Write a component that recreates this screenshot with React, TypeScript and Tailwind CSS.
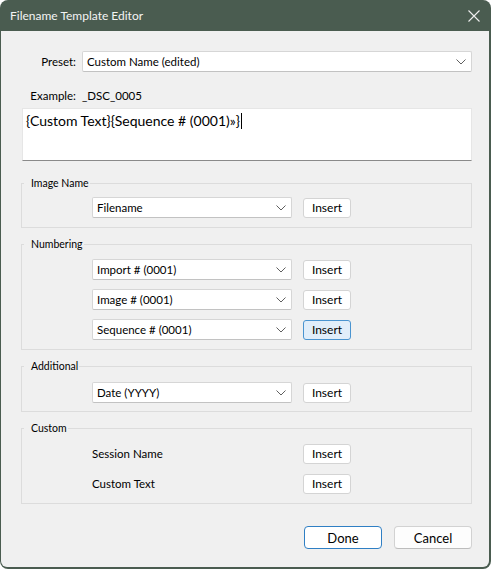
import React from "react";

const font = { fontFamily: 'Lato, "Noto Sans", sans-serif' };

function Chevron() {
  return (
    <svg width="10" height="6" viewBox="0 0 10 6" className="shrink-0">
      <path d="M0.5 0.5 L5 5 L9.5 0.5" fill="none" stroke="#5f5f5f" strokeWidth="1" />
    </svg>
  );
}

function Combo({ value, className = "" }: { value: string; className?: string }) {
  return (
    <div
      className={`flex h-[21px] items-center justify-between rounded-[2px] border border-[#d6d6d6] border-b-[#c2c2c2] bg-white pl-[4px] pr-[5px] text-[11.5px] leading-[16px] text-black ${className}`}
    >
      <span>{value}</span>
      <Chevron />
    </div>
  );
}

function Insert({ active = false }: { active?: boolean }) {
  return (
    <div
      className={`flex h-[20px] w-[48px] items-center justify-center rounded-[3px] border text-[12px] leading-[16px] text-black ${
        active ? "border-[#4a94d0] bg-[#e1eefa]" : "border-[#d4d4d4] bg-white"
      }`}
    >
      Insert
    </div>
  );
}

function Group({ title, children, className = "" }: { title: string; children: React.ReactNode; className?: string }) {
  return (
    <fieldset className={`border border-[#dcdcdc] ${className}`}>
      <legend className="ml-[2px] pl-[7px] pr-[1px] text-[10.5px] leading-[14px] text-black">{title}</legend>
      {children}
    </fieldset>
  );
}

function ComboRow({ value, active = false }: { value: string; active?: boolean }) {
  return (
    <div className="flex items-center">
      <Combo value={value} className="w-[200px]" />
      <div className="ml-[11px]">
        <Insert active={active} />
      </div>
    </div>
  );
}

export default function App() {
  return (
    <div className="h-[569px] w-[491px] bg-white" style={font}>
      <div className="flex h-[569px] w-[491px] flex-col overflow-hidden rounded-[8px] bg-[#4a5c50]">
        <div className="flex h-[31px] shrink-0 items-center justify-between pl-[10px] pr-[10px]">
          <span className="text-[12px] leading-[16px] text-[#f4f4f4]">Filename Template Editor</span>
          <svg width="12" height="12" viewBox="0 0 12 12" className="mr-[1px]">
            <path d="M0.5 0.5 L11.5 11.5 M11.5 0.5 L0.5 11.5" stroke="#eeeeee" strokeWidth="1.1" />
          </svg>
        </div>
        <div className="ml-[1px] mr-[2px] flex h-[536px] flex-col rounded-b-[6px] bg-[#f0f0f0] pl-[20px] pr-[17px] pt-[20px] text-black">
          <div className="flex h-[21px] items-center">
            <div className="w-[55px] text-right text-[11.5px] leading-[16px]">Preset:</div>
            <Combo value="Custom Name (edited)" className="ml-[6px] flex-1" />
          </div>
          <div className="mt-[16px] flex h-[16px] items-center text-[11.5px] leading-[16px]">
            <div className="w-[55px] text-right">Example:</div>
            <div className="ml-[6px]">_DSC_0005</div>
          </div>
          <div className="ml-[1px] mt-[4px] h-[53px] border border-[#e6e6e6] border-b-[#8a8a8a] bg-white pl-[3px] pt-[1px] text-[14px] leading-[18px]">
            <span>{"{Custom Text}{Sequence # (0001)»}"}</span>
            <span className="ml-[1px] inline-block h-[16px] w-[1px] translate-y-[3px] bg-black" />
          </div>

          <Group title="Image Name" className="mt-[15px]">
            <div className="pb-[9px] pl-[70px] pt-[7px]">
              <ComboRow value="Filename" />
            </div>
          </Group>

          <Group title="Numbering" className="mt-[9px]">
            <div className="flex flex-col gap-[9px] pb-[9px] pl-[70px] pt-[8px]">
              <ComboRow value="Import # (0001)" />
              <ComboRow value="Image # (0001)" />
              <ComboRow value="Sequence # (0001)" active />
            </div>
          </Group>

          <Group title="Additional" className="mt-[9px]">
            <div className="pb-[8px] pl-[70px] pt-[9px]">
              <ComboRow value="Date (YYYY)" />
            </div>
          </Group>

          <Group title="Custom" className="mt-[9px]">
            <div className="flex flex-col gap-[10px] pb-[9px] pl-[70px] pt-[9px]">
              <div className="flex items-center">
                <div className="w-[211px] text-[11.5px] leading-[16px]">Session Name</div>
                <Insert />
              </div>
              <div className="flex items-center">
                <div className="w-[211px] text-[11.5px] leading-[16px]">Custom Text</div>
                <Insert />
              </div>
            </div>
          </Group>

          <div className="mt-[22px] flex justify-end gap-[12px]">
            <div className="flex h-[23px] w-[78px] items-center justify-center rounded-[4px] border border-[#2f7fc4] bg-white text-[13px] leading-[16px]">
              Done
            </div>
            <div className="flex h-[23px] w-[78px] items-center justify-center rounded-[4px] border border-[#d2d2d2] border-b-[#bdbdbd] bg-[#fdfdfd] text-[13px] leading-[16px]">
              Cancel
            </div>
          </div>
        </div>
      </div>
    </div>
  );
}
